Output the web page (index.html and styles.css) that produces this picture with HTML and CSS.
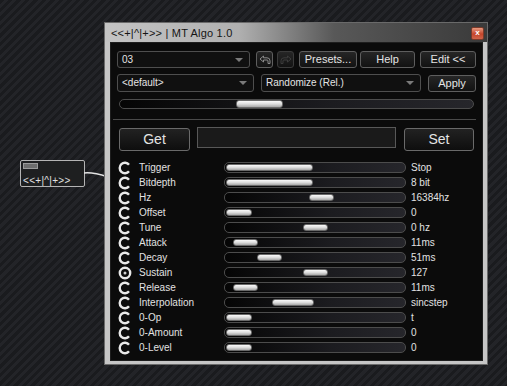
FILE: index.html
```html
<!DOCTYPE html>
<html lang="en">
<head>
    <meta charset="UTF-8">
    <title>MT Algo 1.0</title>
    <link rel="stylesheet" href="styles.css">
</head>
<body>
    <div class="node">
        <div class="node-bar"></div>
        <div class="node-label">&lt;&lt;+|^|+&gt;&gt;</div>
    </div>
    <svg class="wire" width="24" height="14" viewBox="0 0 24 14">
        <path d="M0 5 C 8 4, 15 6, 24 9" fill="none" stroke="#e4e4e4" stroke-width="1.4"/>
    </svg>

    <div class="window">
        <div class="titlebar">
            <span class="title">&lt;&lt;+|^|+&gt;&gt; | MT Algo 1.0</span>
            <span class="close">x</span>
        </div>
        <div class="client">
            <div class="toolbar">
                <div class="select sel-preset">03<span class="arrow"></span></div>
                <div class="btn icon-btn undo">
                    <svg width="12" height="10" viewBox="0 0 12 10"><path d="M1 4 L4.5 1 V2.8 H8 Q11 2.8 11 5.8 V8.5 H9 V6 Q9 5 8 5 H4.5 V7 Z" fill="none" stroke="#8a8a8a" stroke-width="1"/></svg>
                </div>
                <div class="btn icon-btn redo">
                    <svg width="12" height="10" viewBox="0 0 12 10"><path d="M11 4 L7.5 1 V2.8 H4 Q1 2.8 1 5.8 V8.5 H3 V6 Q3 5 4 5 H7.5 V7 Z" fill="none" stroke="#3c3c3c" stroke-width="1"/></svg>
                </div>
                <div class="btn btn-presets">Presets...</div>
                <div class="btn btn-help">Help</div>
                <div class="btn btn-edit">Edit &lt;&lt;</div>
            </div>

            <div class="toolbar row-two">
                <div class="select sel-default">&lt;default&gt;<span class="arrow"></span></div>
                <div class="select sel-random">Randomize (Rel.)<span class="arrow"></span></div>
                <div class="btn btn-apply">Apply</div>
            </div>

            <div class="track main-track">
                <div class="thumb" style="left: 116px; width: 47px;"></div>
            </div>

            <div class="separator"></div>

            <div class="getset">
                <div class="btn big-btn">Get</div>
                <div class="field"></div>
                <div class="btn big-btn">Set</div>
            </div>

            <div class="params">
                <div class="param"><span class="knob"><svg width="14" height="14" viewBox="0 0 14 14"><path d="M11 3.8 A5.2 5.2 0 1 0 11 10.2" fill="none" stroke="#e8e8e8" stroke-width="2.4"/></svg></span><span class="label">Trigger</span><div class="track"><div class="thumb" style="left: 1px; width: 87px;"></div></div><span class="value">Stop</span></div>
                <div class="param"><span class="knob"><svg width="14" height="14" viewBox="0 0 14 14"><path d="M11 3.8 A5.2 5.2 0 1 0 11 10.2" fill="none" stroke="#e8e8e8" stroke-width="2.4"/></svg></span><span class="label">Bitdepth</span><div class="track"><div class="thumb" style="left: 1px; width: 87px;"></div></div><span class="value">8 bit</span></div>
                <div class="param"><span class="knob"><svg width="14" height="14" viewBox="0 0 14 14"><path d="M11 3.8 A5.2 5.2 0 1 0 11 10.2" fill="none" stroke="#e8e8e8" stroke-width="2.4"/></svg></span><span class="label">Hz</span><div class="track"><div class="thumb" style="left: 84px; width: 25px;"></div></div><span class="value">16384hz</span></div>
                <div class="param"><span class="knob"><svg width="14" height="14" viewBox="0 0 14 14"><path d="M11 3.8 A5.2 5.2 0 1 0 11 10.2" fill="none" stroke="#e8e8e8" stroke-width="2.4"/></svg></span><span class="label">Offset</span><div class="track"><div class="thumb" style="left: 1px; width: 26px;"></div></div><span class="value">0</span></div>
                <div class="param"><span class="knob"><svg width="14" height="14" viewBox="0 0 14 14"><path d="M11 3.8 A5.2 5.2 0 1 0 11 10.2" fill="none" stroke="#e8e8e8" stroke-width="2.4"/></svg></span><span class="label">Tune</span><div class="track"><div class="thumb" style="left: 78px; width: 25px;"></div></div><span class="value">0 hz</span></div>
                <div class="param"><span class="knob"><svg width="14" height="14" viewBox="0 0 14 14"><path d="M11 3.8 A5.2 5.2 0 1 0 11 10.2" fill="none" stroke="#e8e8e8" stroke-width="2.4"/></svg></span><span class="label">Attack</span><div class="track"><div class="thumb" style="left: 8px; width: 25px;"></div></div><span class="value">11ms</span></div>
                <div class="param"><span class="knob"><svg width="14" height="14" viewBox="0 0 14 14"><path d="M11 3.8 A5.2 5.2 0 1 0 11 10.2" fill="none" stroke="#e8e8e8" stroke-width="2.4"/></svg></span><span class="label">Decay</span><div class="track"><div class="thumb" style="left: 32px; width: 25px;"></div></div><span class="value">51ms</span></div>
                <div class="param"><span class="knob"><svg width="14" height="14" viewBox="0 0 14 14"><circle cx="7" cy="7" r="5.2" fill="none" stroke="#e8e8e8" stroke-width="2.4"/><circle cx="7" cy="7" r="1.5" fill="#d0d0d0"/></svg></span><span class="label">Sustain</span><div class="track"><div class="thumb" style="left: 78px; width: 25px;"></div></div><span class="value">127</span></div>
                <div class="param"><span class="knob"><svg width="14" height="14" viewBox="0 0 14 14"><path d="M11 3.8 A5.2 5.2 0 1 0 11 10.2" fill="none" stroke="#e8e8e8" stroke-width="2.4"/></svg></span><span class="label">Release</span><div class="track"><div class="thumb" style="left: 8px; width: 25px;"></div></div><span class="value">11ms</span></div>
                <div class="param"><span class="knob"><svg width="14" height="14" viewBox="0 0 14 14"><path d="M11 3.8 A5.2 5.2 0 1 0 11 10.2" fill="none" stroke="#e8e8e8" stroke-width="2.4"/></svg></span><span class="label">Interpolation</span><div class="track"><div class="thumb" style="left: 47px; width: 42px;"></div></div><span class="value">sincstep</span></div>
                <div class="param"><span class="knob"><svg width="14" height="14" viewBox="0 0 14 14"><path d="M11 3.8 A5.2 5.2 0 1 0 11 10.2" fill="none" stroke="#e8e8e8" stroke-width="2.4"/></svg></span><span class="label">0-Op</span><div class="track"><div class="thumb" style="left: 1px; width: 26px;"></div></div><span class="value">t</span></div>
                <div class="param"><span class="knob"><svg width="14" height="14" viewBox="0 0 14 14"><path d="M11 3.8 A5.2 5.2 0 1 0 11 10.2" fill="none" stroke="#e8e8e8" stroke-width="2.4"/></svg></span><span class="label">0-Amount</span><div class="track"><div class="thumb" style="left: 1px; width: 26px;"></div></div><span class="value">0</span></div>
                <div class="param"><span class="knob"><svg width="14" height="14" viewBox="0 0 14 14"><path d="M11 3.8 A5.2 5.2 0 1 0 11 10.2" fill="none" stroke="#e8e8e8" stroke-width="2.4"/></svg></span><span class="label">0-Level</span><div class="track"><div class="thumb" style="left: 1px; width: 26px;"></div></div><span class="value">0</span></div>
            </div>
        </div>
    </div>
</body>
</html>
```
FILE: styles.css
```css
body {
    margin: 0;
    width: 507px;
    height: 386px;
    overflow: hidden;
    position: relative;
    background: repeating-linear-gradient(135deg, #1a1b1e 0px, #1a1b1e 3px, #232428 3px, #232428 6px);
    font-family: "Liberation Sans", Arial, sans-serif;
    font-size: 10px;
    color: #e2e2e2;
}

/* node on the patch canvas */
.node {
    position: absolute;
    left: 20px;
    top: 160px;
    width: 65px;
    height: 27px;
    box-sizing: border-box;
    border: 1px solid #b4b4b4;
    border-radius: 2px;
    background: #1e1f20;
}

.node-bar {
    margin: 2px 0 0 2px;
    width: 15px;
    height: 6px;
    box-sizing: border-box;
    background: #6e6e6e;
    border: 1px solid #9a9a9a;
}

.node-label {
    margin: 7px 0 0 2px;
    font-size: 10px;
    letter-spacing: 0.3px;
    color: #e0e0e0;
    line-height: 10px;
}

.wire {
    position: absolute;
    left: 84px;
    top: 168px;
}

/* plugin window */
.window {
    position: absolute;
    left: 104px;
    top: 22px;
    width: 384px;
    height: 343px;
    box-sizing: border-box;
    border: 1px solid #6a6a6a;
    background: #c6c6c6;
    padding: 0 4px 3px 5px;
    display: flex;
    flex-direction: column;
}

.titlebar {
    height: 19px;
    margin: 0 -4px 0 -5px;
    padding: 0 3px 0 6px;
    display: flex;
    align-items: center;
    justify-content: space-between;
    background: linear-gradient(to right, #c4c4c4 0%, #b0b0b0 35%, #585858 60%, #3a3a3a 100%);
}

.title {
    color: #151515;
    font-size: 11px;
    letter-spacing: 0.2px;
}

.close {
    width: 13px;
    height: 13px;
    margin-top: 2px;
    box-sizing: border-box;
    border: 1px solid #7a3a2a;
    border-radius: 2px;
    background: linear-gradient(#e89a80, #c6452a 55%, #d0644a);
    color: #fff;
    font-size: 8px;
    line-height: 10px;
    text-align: center;
    font-weight: bold;
}

.client {
    flex: 1;
    background: #0b0b0b;
    padding: 9px 7px 0 7px;
    box-shadow: inset 0 0 0 1px #1e1e1e;
}

.toolbar {
    display: flex;
    height: 17px;
}

.row-two {
    height: 18px;
    margin-top: 6px;
}

.select {
    position: relative;
    box-sizing: border-box;
    border: 1px solid #4e4e4e;
    border-radius: 3px;
    background: #101010;
    padding-left: 4px;
    font-size: 10px;
    line-height: 15px;
    color: #e4e4e4;
}

.row-two .select {
    line-height: 16px;
}

.arrow {
    position: absolute;
    right: 6px;
    top: 6px;
    border-left: 4px solid transparent;
    border-right: 4px solid transparent;
    border-top: 4px solid #7a7a7a;
}

.sel-preset {
    width: 133px;
}

.sel-default {
    width: 137px;
}

.sel-random {
    width: 160px;
    margin-left: 7px;
}

.btn {
    box-sizing: border-box;
    border: 1px solid #5e5e5e;
    border-radius: 3px;
    background: linear-gradient(#262626, #121212);
    color: #e4e4e4;
    font-size: 11px;
    text-align: center;
    line-height: 15px;
}

.icon-btn {
    width: 17px;
    display: flex;
    align-items: center;
    justify-content: center;
}

.undo {
    margin-left: 6px;
}

.redo {
    margin-left: 4px;
    border-color: #3a3a3a;
}

.btn-presets {
    width: 58px;
    margin-left: 5px;
}

.btn-help {
    width: 55px;
    margin-left: 3px;
}

.btn-edit {
    width: 56px;
    margin-left: 5px;
}

.btn-apply {
    width: 48px;
    height: 17px;
    margin: 1px 0 0 7px;
}

.track {
    position: relative;
    box-sizing: border-box;
    height: 11px;
    border: 1px solid #4c4c4c;
    border-radius: 5px;
    background: linear-gradient(to right, #050505, #1c1c20 60%, #26262b);
}

.main-track {
    width: 355px;
    height: 10px;
    margin: 7px 0 0 2px;
}

.thumb {
    position: absolute;
    top: 1px;
    height: 7px;
    box-sizing: border-box;
    border: 1px solid #6a6a6a;
    border-radius: 3px;
    background: linear-gradient(#fafafa, #dcdcdc 50%, #a8a8a8);
}

.main-track .thumb {
    top: 0px;
    height: 8px;
}

.separator {
    height: 1px;
    width: 363px;
    margin: 10px 0 0 -4px;
    background: #4a4a4a;
}

.getset {
    display: flex;
    align-items: flex-start;
    margin-top: 7px;
}

.big-btn {
    width: 71px;
    height: 23px;
    margin: 1px 0 0 2px;
    font-size: 14px;
    line-height: 21px;
    border-color: #6a6a6a;
    background: linear-gradient(#222, #0e0e0e);
}

.big-btn:last-child {
    width: 70px;
    margin-left: 8px;
}

.field {
    width: 199px;
    height: 21px;
    margin-left: 7px;
    box-sizing: border-box;
    border: 1px solid #585858;
    background: #1a1a1a;
}

.params {
    margin-top: 9px;
}

.param {
    display: flex;
    align-items: center;
    height: 15px;
}

.knob {
    width: 14px;
    height: 14px;
    margin-left: 1px;
}

.knob svg {
    display: block;
}

.label {
    width: 85px;
    margin-left: 7px;
    font-size: 10px;
}

.param .track {
    width: 182px;
}

.value {
    margin-left: 5px;
    font-size: 10px;
}
```
